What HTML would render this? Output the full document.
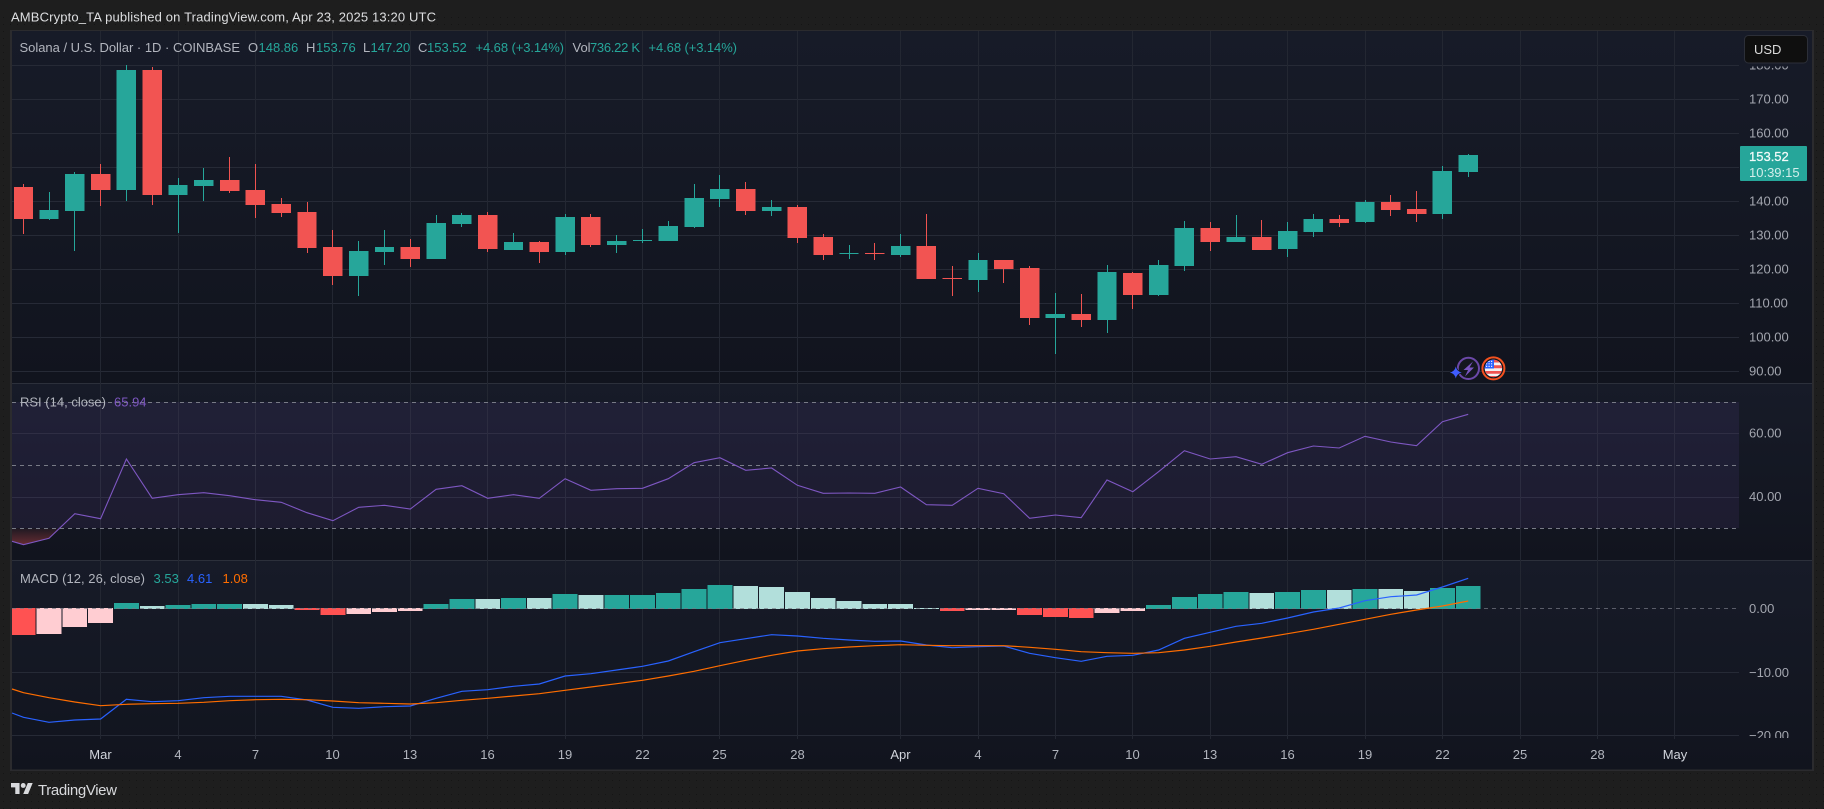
<!DOCTYPE html>
<html lang="en"><head><meta charset="utf-8"><title>SOL/USD chart</title>
<style>html,body{margin:0;padding:0;background:#1c1c1c;width:1824px;height:809px;overflow:hidden}svg{display:block}text{font-family:"Liberation Sans",Arial,sans-serif;font-size:13px}</style>
</head><body>
<svg width="1824" height="809" viewBox="0 0 1824 809" xmlns="http://www.w3.org/2000/svg">
<defs>
<linearGradient id="pg" x1="0" y1="0" x2="0" y2="1"><stop offset="0" stop-color="#171b28"/><stop offset="1" stop-color="#11141e"/></linearGradient>
<linearGradient id="os" x1="0" y1="0" x2="0" y2="1"><stop offset="0" stop-color="#ef5350" stop-opacity=".06"/><stop offset="1" stop-color="#ef5350" stop-opacity=".38"/></linearGradient>
<pattern id="dots" width="7" height="7" patternUnits="userSpaceOnUse"><rect width="7" height="7" fill="#1e1e1e"/><rect x="3" y="3" width="1" height="1" fill="#151515"/></pattern>
<clipPath id="cp"><rect x="12" y="31" width="1727" height="704"/></clipPath>
<clipPath id="ax"><rect x="1739" y="31" width="73" height="707"/></clipPath>
<clipPath id="fl"><circle cx="1493.4" cy="368.4" r="8.7"/></clipPath>
</defs>
<rect width="1824" height="809" fill="url(#dots)"/>
<rect width="1824" height="14" fill="#1e1e1e"/>
<text x="11" y="21.5" fill="#dedfe1" textLength="425">AMBCrypto_TA published on TradingView.com, Apr 23, 2025 13:20 UTC</text>
<rect x="10" y="30" width="1804" height="741" fill="#2b2b2e"/>
<rect x="12" y="31" width="1800" height="352" fill="url(#pg)"/>
<rect x="12" y="384" width="1800" height="176" fill="url(#pg)"/>
<rect x="12" y="561" width="1800" height="208.5" fill="url(#pg)"/>
<path d="M12 383.5H1812M12 560.5H1812" stroke="#2c303b" fill="none"/>

<!-- grid -->
<path shape-rendering="crispEdges" d="M12 65.5H1739M12 99.5H1739M12 133.5H1739M12 167.5H1739M12 201.5H1739M12 235.5H1739M12 269.5H1739M12 303.5H1739M12 337.5H1739M12 371.5H1739M12 433.5H1739M12 497.5H1739M12 672.5H1739M12 735.5H1739" stroke="#262a36" fill="none"/>
<path shape-rendering="crispEdges" d="M100.5 31V739M178.5 31V739M255.5 31V739M332.5 31V739M410.5 31V739M487.5 31V739M565.5 31V739M642.5 31V739M719.5 31V739M797.5 31V739M900.5 31V739M978.5 31V739M1055.5 31V739M1132.5 31V739M1210.5 31V739M1287.5 31V739M1365.5 31V739M1442.5 31V739M1520.5 31V739M1597.5 31V739M1674.5 31V739" stroke="#232732" fill="none"/>

<!-- candles -->
<path fill="none" stroke="#26a69a" d="M49.5 192V220M74.5 172V251M126.5 65V201M178.5 178V233M203.5 168V201M358.5 241V296M384.5 230V265M436.5 215V259M461.5 213V227M513.5 233V250M565.5 214V255M616.5 235V253M642.5 229V243M668.5 221V241M694.5 184V228M719.5 175V207M771.5 200V216M849.5 245V259M900.5 234V257M978.5 253V292M1055.5 293V354M1107.5 265V333M1158.5 260V296M1184.5 221V271M1236.5 215V242M1287.5 222V257M1313.5 214V237M1365.5 200V223M1442.5 166V219M1468.5 154V177"/>
<path fill="none" stroke="#ef5350" d="M23.5 184V234M100.5 164V206M152.5 67V205M229.5 157V193M255.5 164V218M281.5 198V217M307.5 202V253M332.5 230V285M410.5 239V267M487.5 212V252M539.5 241V263M590.5 214V247M745.5 182V215M797.5 205V243M823.5 234V260M874.5 243V260M926.5 214V279M952.5 266V296M1003.5 260V283M1029.5 266V325M1081.5 294V327M1132.5 272V309M1210.5 222V251M1261.5 220V250M1339.5 215V227M1390.5 195V216M1416.5 191V222"/>
<path shape-rendering="crispEdges" fill="#26a69a" d="M39.3 210h19.4V219h-19.4zM65.1 174h19.4V211h-19.4zM116.7 70h19.4V190h-19.4zM168.3 185h19.4V195h-19.4zM194.1 180h19.4V186h-19.4zM349 251h19.4V276h-19.4zM374.8 247h19.4V252h-19.4zM426.4 223h19.4V259h-19.4zM452.2 215h19.4V224h-19.4zM503.8 242h19.4V250h-19.4zM555.4 217h19.4V252h-19.4zM607 241h19.4V245h-19.4zM632.8 240h19.4V241h-19.4zM658.6 226h19.4V241h-19.4zM684.4 198h19.4V227h-19.4zM710.2 189h19.4V199h-19.4zM761.9 207h19.4V211h-19.4zM839.3 253h19.4V254h-19.4zM890.9 246h19.4V255h-19.4zM968.3 260h19.4V280h-19.4zM1045.7 314h19.4V318h-19.4zM1097.3 272h19.4V320h-19.4zM1148.9 265h19.4V295h-19.4zM1174.7 228h19.4V266h-19.4zM1226.3 237h19.4V242h-19.4zM1277.9 231h19.4V249h-19.4zM1303.7 219h19.4V232h-19.4zM1355.3 202h19.4V222h-19.4zM1432.7 171h19.4V214h-19.4zM1458.5 155h19.4V172h-19.4z"/>
<path shape-rendering="crispEdges" fill="#f25452" d="M13.8 187h19.4V219h-19.4zM90.9 174h19.4V190h-19.4zM142.5 70h19.4V195h-19.4zM219.9 180h19.4V191h-19.4zM245.7 190h19.4V205h-19.4zM271.5 204h19.4V213h-19.4zM297.3 212h19.4V248h-19.4zM323.2 247h19.4V276h-19.4zM400.6 247h19.4V259h-19.4zM478 215h19.4V249h-19.4zM529.6 242h19.4V252h-19.4zM581.2 217h19.4V245h-19.4zM736 189h19.4V211h-19.4zM787.7 207h19.4V238h-19.4zM813.5 237h19.4V255h-19.4zM865.1 253h19.4V254h-19.4zM916.7 246h19.4V279h-19.4zM942.5 278h19.4V279h-19.4zM994.1 260h19.4V269h-19.4zM1019.9 268h19.4V318h-19.4zM1071.5 314h19.4V320h-19.4zM1123.1 273h19.4V295h-19.4zM1200.5 228h19.4V242h-19.4zM1252.1 237h19.4V250h-19.4zM1329.5 219h19.4V223h-19.4zM1381.1 202h19.4V210h-19.4zM1406.9 209h19.4V214h-19.4z"/>

<!-- event icons -->
<circle cx="1468.4" cy="368.4" r="10.6" fill="#14171f" stroke="#6b48a8" stroke-width="2"/>
<path d="M1473 361.5L1463.5 370h4.5L1465 376.5 1474 367.5h-4.5z" fill="#7a55c0"/>
<path d="M1455.8 366.5q1 5 6 6q-5 1-6 6q-1-5-6-6q5-1 6-6z" fill="#3f5cff" stroke="#13161f" stroke-width="1.6" paint-order="stroke"/>
<circle cx="1493.4" cy="368.4" r="11" fill="#14171f" stroke="#f4511e" stroke-width="2"/>
<g clip-path="url(#fl)">
<rect x="1484" y="359" width="19" height="19" fill="#f2f2f2"/>
<path d="M1484 359.5h19v3h-19zM1484 365.3h19v3h-19zM1484 371h19v2.8h-19zM1484 376h19v2h-19z" fill="#ef5350"/>
<rect x="1484" y="359" width="10" height="9.5" fill="#2962ff"/>
<path d="M1486 360.8h1.2v1.2h-1.2zM1488.5 360.8h1.2v1.2h-1.2zM1491 360.8h1.2v1.2h-1.2zM1486 363.2h1.2v1.2h-1.2zM1488.5 363.2h1.2v1.2h-1.2zM1491 363.2h1.2v1.2h-1.2zM1486 365.8h1.2v1.2h-1.2zM1488.5 365.8h1.2v1.2h-1.2zM1491 365.8h1.2v1.2h-1.2z" fill="#e8edff"/>
</g>

<!-- RSI -->
<rect x="12" y="402" width="1727" height="126" fill="#7e57c2" fill-opacity=".1"/>
<polygon points="12,528.5 60.5,528.5 49,538.3 23.5,544.7 12,541.3" fill="url(#os)"/>
<path d="M12 402.5H1739M12 465.5H1739M12 528.5H1739" stroke="#787b86" stroke-dasharray="4 4" fill="none"/>
<polyline fill="none" stroke="#7e57c2" stroke-width="1.1" points="12,541.3 23.5,544.7 49,538.3 74.8,513.7 100.6,518.7 126.4,459 152.2,498.3 178,494.7 203.8,492.7 229.6,495.7 255.4,499.7 281.2,502.3 307,512.7 332.9,520.7 358.7,507.3 384.5,505.3 410.3,509 436.1,489.3 461.9,485.7 487.7,498.3 513.5,494.7 539.3,498.3 565.1,478.7 590.9,490.3 616.7,488.7 642.5,488.3 668.3,478.7 694.1,462.7 719.9,457.7 745.7,470.3 771.6,468 797.4,485.3 823.2,493.3 849,493 874.8,493.3 900.6,487 926.4,504.7 952.2,505.3 978,488.3 1003.8,493.7 1029.6,518.3 1055.4,515 1081.2,517.7 1107,480 1132.8,491.7 1158.6,471.7 1184.4,450.7 1210.2,459 1236,456.7 1261.8,464.3 1287.6,452.7 1313.4,446 1339.2,448 1365,436.3 1390.8,442 1416.6,445.7 1442.4,421.7 1468.2,414.3"/>

<!-- MACD histogram -->
<g clip-path="url(#cp)" shape-rendering="crispEdges">
<path fill="#26a69a" d="M114 603h24.8V609h-24.8zM165.6 605h24.8V609h-24.8zM191.4 604h24.8V609h-24.8zM217.2 604h24.8V609h-24.8zM423.7 604h24.8V609h-24.8zM449.5 599h24.8V609h-24.8zM501.1 598h24.8V609h-24.8zM552.7 594h24.8V609h-24.8zM604.3 595h24.8V609h-24.8zM630.1 595h24.8V609h-24.8zM655.9 593h24.8V609h-24.8zM681.7 589h24.8V609h-24.8zM707.5 585h24.8V609h-24.8zM1146.2 605h24.8V609h-24.8zM1172 597h24.8V609h-24.8zM1197.8 594h24.8V609h-24.8zM1223.6 592h24.8V609h-24.8zM1275.2 592h24.8V609h-24.8zM1301 590h24.8V609h-24.8zM1352.6 589h24.8V609h-24.8zM1430 588h24.8V609h-24.8zM1455.8 586h24.8V609h-24.8z"/>
<path fill="#b2dfdb" d="M139.8 606h24.8V609h-24.8zM243 604h24.8V609h-24.8zM268.8 605h24.8V609h-24.8zM475.3 599h24.8V609h-24.8zM526.9 598h24.8V609h-24.8zM578.5 595h24.8V609h-24.8zM733.3 586h24.8V609h-24.8zM759.2 587h24.8V609h-24.8zM785 592h24.8V609h-24.8zM810.8 598h24.8V609h-24.8zM836.6 601h24.8V609h-24.8zM862.4 604h24.8V609h-24.8zM888.2 604h24.8V609h-24.8zM914 608h24.8V609h-24.8zM1249.4 593h24.8V609h-24.8zM1326.8 590h24.8V609h-24.8zM1378.4 589h24.8V609h-24.8zM1404.2 591h24.8V609h-24.8z"/>
<path fill="#ff5252" d="M12 608h23.4V635H12zM294.6 608h24.8V610h-24.8zM320.5 608h24.8V615h-24.8zM939.8 608h24.8V611h-24.8zM1017.2 608h24.8V615h-24.8zM1043 608h24.8V617h-24.8zM1068.8 608h24.8V618h-24.8z"/>
<path fill="#ffcdd2" d="M36.6 608h24.8V634h-24.8zM62.4 608h24.8V627h-24.8zM88.2 608h24.8V623h-24.8zM346.3 608h24.8V614h-24.8zM372.1 608h24.8V612h-24.8zM397.9 608h24.8V611h-24.8zM965.6 608h24.8V610h-24.8zM991.4 608h24.8V610h-24.8zM1094.6 608h24.8V613h-24.8zM1120.4 608h24.8V611h-24.8z"/>
</g>
<path d="M12 608.5H1739" stroke="#787b86" stroke-opacity=".7" stroke-dasharray="4 4" fill="none"/>
<polyline fill="none" stroke="#2962ff" stroke-width="1.2" points="12,713 23.5,717.3 49,722.3 74.8,720 100.6,719 126.4,699.3 152.2,701.7 178,700.7 203.8,697.7 229.6,696.3 255.4,696.3 281.2,696.3 307,700 332.9,707.3 358.7,708.3 384.5,706.7 410.3,706 436.1,698.3 461.9,691.3 487.7,689.7 513.5,686.3 539.3,684 565.1,676 590.9,673.7 616.7,670 642.5,666.3 668.3,661 694.1,651.7 719.9,642.7 745.7,638.7 771.6,634.7 797.4,636 823.2,638.3 849,640 874.8,641.3 900.6,641 926.4,645 952.2,647.7 978,646.7 1003.8,646 1029.6,653.3 1055.4,657.7 1081.2,661.3 1107,656.3 1132.8,655.3 1158.6,650 1184.4,638.3 1210.2,632.3 1236,626.3 1261.8,623.3 1287.6,618 1313.4,612 1339.2,608 1365,600.7 1390.8,596.7 1416.6,595 1442.4,587 1468.2,578.3"/>
<polyline fill="none" stroke="#ff6d00" stroke-width="1.2" points="12,689 23.5,692.7 49,697.7 74.8,702 100.6,705.7 126.4,704.3 152.2,703.7 178,703.3 203.8,702.3 229.6,700.7 255.4,699.7 281.2,699.3 307,699.7 332.9,701 358.7,702.7 384.5,703.3 410.3,704 436.1,702.7 461.9,700.3 487.7,698.3 513.5,696 539.3,693.7 565.1,690.3 590.9,687 616.7,683.7 642.5,680.3 668.3,676 694.1,671.3 719.9,665.7 745.7,660.3 771.6,655.3 797.4,651 823.2,648.7 849,647 874.8,645.7 900.6,644.7 926.4,645.3 952.2,645.7 978,645.7 1003.8,645.7 1029.6,647.3 1055.4,649.3 1081.2,651.7 1107,652.7 1132.8,653.3 1158.6,652.7 1184.4,650 1210.2,646.3 1236,642 1261.8,638 1287.6,633.7 1313.4,629.3 1339.2,624.3 1365,619.3 1390.8,614.3 1416.6,610 1442.4,606 1468.2,601"/>

<!-- legends -->
<g fill="#b2b5be">
<text x="19.5" y="52" textLength="220.5">Solana / U.S. Dollar · 1D · COINBASE</text>
<text x="248" y="52">O</text><text x="306" y="52">H</text><text x="363" y="52">L</text><text x="418" y="52">C</text><text x="572.5" y="52">Vol</text>
<text x="20" y="406.5" textLength="86">RSI (14, close)</text>
<text x="20" y="583" textLength="125">MACD (12, 26, close)</text>
</g>
<g fill="#26a69a">
<text x="258.5" y="52">148.86</text><text x="316" y="52">153.76</text><text x="370.5" y="52">147.20</text><text x="427" y="52">153.52</text>
<text x="475.5" y="52" textLength="88.5">+4.68 (+3.14%)</text><text x="590" y="52" textLength="50">736.22 K</text><text x="648.5" y="52" textLength="88.5">+4.68 (+3.14%)</text>
<text x="153.5" y="583">3.53</text>
</g>
<text x="114" y="406.5" fill="#7e57c2">65.94</text>
<text x="187" y="583" fill="#2962ff">4.61</text>
<text x="222.5" y="583" fill="#ff6d00">1.08</text>

<!-- price axis -->
<g clip-path="url(#ax)" fill="#a3a6af">
<text x="1749" y="69.5">180.00</text><text x="1749" y="103.5">170.00</text><text x="1749" y="137.5">160.00</text><text x="1749" y="205.5">140.00</text><text x="1749" y="239.5">130.00</text><text x="1749" y="273.5">120.00</text><text x="1749" y="307.5">110.00</text><text x="1749" y="341.5">100.00</text><text x="1749" y="375.5">90.00</text>
<text x="1749" y="437.5">60.00</text><text x="1749" y="501">40.00</text>
<text x="1749" y="613">0.00</text><text x="1749" y="677" textLength="40">−10.00</text><text x="1749" y="740" textLength="40">−20.00</text>
</g>
<rect x="1740" y="62" width="72" height="4.5" fill="#161a27"/>
<rect x="1744.5" y="35.5" width="63" height="27.5" rx="4" fill="#0f0f0f" stroke="#2c2f38"/>
<text x="1754" y="54" fill="#dbdbdb">USD</text>
<rect x="1740" y="146" width="67" height="35" rx="1" fill="#26a69a"/>
<text x="1749" y="161" fill="#f2faf9" stroke="#f2faf9" stroke-width=".25">153.52</text>
<text x="1749" y="177" fill="#d3eeeb">10:39:15</text>

<!-- time axis -->
<g fill="#b2b5be" text-anchor="middle">
<text x="100.5" y="759" fill="#d1d4dc">Mar</text><text x="178" y="759">4</text><text x="255.5" y="759">7</text><text x="332.5" y="759">10</text><text x="410" y="759">13</text><text x="487.5" y="759">16</text><text x="565" y="759">19</text><text x="642.5" y="759">22</text><text x="719.5" y="759">25</text><text x="797.5" y="759">28</text><text x="900.5" y="759" fill="#d1d4dc">Apr</text><text x="978" y="759">4</text><text x="1055.5" y="759">7</text><text x="1132.5" y="759">10</text><text x="1210" y="759">13</text><text x="1287.5" y="759">16</text><text x="1365" y="759">19</text><text x="1442.5" y="759">22</text><text x="1520" y="759">25</text><text x="1597.5" y="759">28</text><text x="1675" y="759" fill="#d1d4dc">May</text>
</g>

<!-- footer -->
<g transform="translate(11,780.6) scale(.611)" fill="#d8d9dc"><path d="M14 22H7V11H0V4h14v18zM28 22h-8l7.5-18h8L28 22z"/><circle cx="20" cy="8" r="4"/></g>
<text x="38" y="795" fill="#d8d9dc" textLength="79" style="font-size:15px">TradingView</text>
</svg>
</body></html>
